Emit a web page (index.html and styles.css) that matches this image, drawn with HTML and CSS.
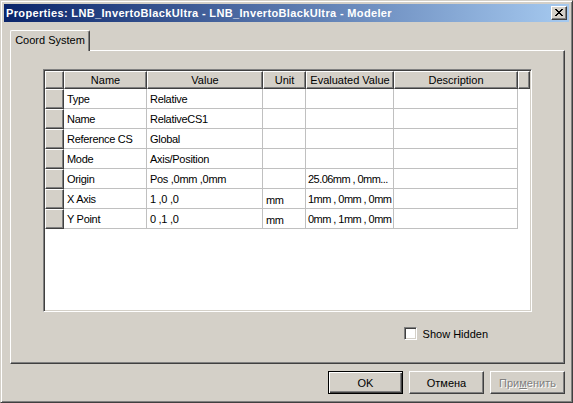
FILE: index.html
```html
<!DOCTYPE html>
<html lang="ru">
<head>
    <meta charset="UTF-8">
    <title>Properties</title>
    <link rel="stylesheet" href="styles.css">
</head>
<body>

    <div class="window">
        <!-- Title bar -->
        <div class="titlebar">
            <span class="title">Properties: LNB_InvertoBlackUltra - LNB_InvertoBlackUltra - Modeler</span>
            <div class="close-btn">
                <svg width="8" height="7" viewBox="0 0 8 7" shape-rendering="crispEdges">
                    <path fill="#000" d="M0 0h2v1H0z M6 0h2v1H6z M1 1h2v1H1z M5 1h2v1H5z M2 2h4v1H2z M3 3h2v1H3z M2 4h4v1H2z M1 5h2v1H1z M5 5h2v1H5z M0 6h2v1H0z M6 6h2v1H6z"/>
                </svg>
            </div>
        </div>

        <div class="dialog-body">
            <!-- Tabs -->
            <div class="tabs">
                <div class="tab active">Coord System</div>
            </div>

            <div class="tab-panel">
                <div class="grid-box">
                    <table class="grid">
                        <colgroup>
                            <col class="c-hdr"><col class="c-name"><col class="c-value"><col class="c-unit"><col class="c-eval"><col class="c-desc"><col class="c-end">
                        </colgroup>
                        <thead>
                            <tr>
                                <th></th>
                                <th>Name</th>
                                <th>Value</th>
                                <th>Unit</th>
                                <th>Evaluated Value</th>
                                <th>Description</th>
                                <th></th>
                            </tr>
                        </thead>
                        <tbody>
                            <tr><th></th><td>Type</td><td>Relative</td><td></td><td></td><td></td><td class="end"></td></tr>
                            <tr><th></th><td>Name</td><td>RelativeCS1</td><td></td><td></td><td></td><td class="end"></td></tr>
                            <tr><th></th><td>Reference CS</td><td>Global</td><td></td><td></td><td></td><td class="end"></td></tr>
                            <tr><th></th><td>Mode</td><td>Axis/Position</td><td></td><td></td><td></td><td class="end"></td></tr>
                            <tr><th></th><td>Origin</td><td>Pos ,0mm ,0mm</td><td></td><td class="eval">25.06mm , 0mm...</td><td></td><td class="end"></td></tr>
                            <tr><th></th><td>X Axis</td><td>1 ,0 ,0</td><td class="unit">mm</td><td class="eval">1mm , 0mm , 0mm</td><td></td><td class="end"></td></tr>
                            <tr><th></th><td>Y Point</td><td>0 ,1 ,0</td><td class="unit">mm</td><td class="eval">0mm , 1mm , 0mm</td><td></td><td class="end"></td></tr>
                        </tbody>
                    </table>
                </div>

                <div class="options">
                    <label class="check"><span class="checkbox"></span>Show Hidden</label>
                </div>
            </div>

            <!-- Dialog buttons -->
            <div class="buttons">
                <button type="button" class="btn default">OK</button>
                <button type="button" class="btn">Отмена</button>
                <button type="button" class="btn disabled">При<u>м</u>енить</button>
            </div>
        </div>
    </div>

</body>
</html>
```

FILE: styles.css
```css
/* Reset */
* {
    margin: 0;
    padding: 0;
    box-sizing: border-box;
}

body {
    font-family: "Liberation Sans", Arial, sans-serif;
    font-size: 11px;
    color: #000;
    background-color: #d4d0c8;
}

/* Window frame */
.window {
    width: 573px;
    height: 403px;
    background-color: #d4d0c8;
    border: 1px solid;
    border-color: #d4d0c8 #404040 #404040 #d4d0c8;
    box-shadow: inset 1px 1px #fff, inset -1px -1px #808080;
    padding: 3px;
    display: flex;
    flex-direction: column;
}

/* Title bar */
.titlebar {
    height: 18px;
    display: flex;
    align-items: center;
    justify-content: space-between;
    background: linear-gradient(to right, #0a246a, #a6caf0);
    padding: 0 2px 0 2px;
}

.title {
    color: #fff;
    font-weight: bold;
    font-size: 11px;
    letter-spacing: 0.35px;
    white-space: nowrap;
}

.close-btn {
    width: 16px;
    height: 14px;
    background-color: #d4d0c8;
    border: 1px solid;
    border-color: #fff #404040 #404040 #fff;
    box-shadow: inset -1px -1px #808080;
    display: flex;
    padding: 2px 0 0 3px;
}

/* Dialog body */
.dialog-body {
    flex: 1;
    display: flex;
    flex-direction: column;
    padding: 8px 4px 0 6px;
}

.tabs {
    display: flex;
    height: 20px;
}

.tab {
    width: 80px;
    height: 21px;
    text-align: center;
    line-height: 18px;
    background-color: #d4d0c8;
    border: 1px solid;
    border-bottom: none;
    border-color: #fff #404040 #fff #fff;
    box-shadow: inset -1px 0 #808080;
    border-radius: 2px 2px 0 0;
    position: relative;
    z-index: 1;
}

.tab-panel {
    width: 555px;
    height: 314px;
    border: 1px solid;
    border-color: #fff #404040 #404040 #fff;
    box-shadow: inset -1px -1px #808080;
}

/* Property grid */
.grid-box {
    width: 489px;
    height: 243px;
    margin: 18px 0 0 32px;
    background-color: #fff;
    border: 1px solid;
    border-color: #808080 #fff #fff #808080;
    box-shadow: inset 1px 1px #404040, inset -1px -1px #d4d0c8;
    padding: 1px;
    overflow: hidden;
}

.grid {
    border-collapse: separate;
    border-spacing: 0;
    table-layout: fixed;
    width: 485px;
}

.c-hdr { width: 19px; }
.c-name { width: 83px; }
.c-value { width: 116px; }
.c-unit { width: 43px; }
.c-eval { width: 88px; }
.c-desc { width: 124px; }
.c-end { width: 12px; }

.grid th {
    height: 18px;
    font-weight: normal;
    text-align: center;
    background-color: #d4d0c8;
    border-top: 1px solid #fff;
    border-left: 1px solid #fff;
    border-right: 1px solid #404040;
    border-bottom: 1px solid #404040;
    box-shadow: inset -1px -1px #808080;
    white-space: nowrap;
    overflow: hidden;
}

.grid tbody th {
    height: 20px;
}

.grid td {
    height: 20px;
    padding: 0 0 0 3px;
    border-right: 1px solid #c0c0c0;
    border-bottom: 1px solid #c0c0c0;
    letter-spacing: -0.3px;
    white-space: nowrap;
    overflow: hidden;
}

.grid td.eval {
    padding-left: 2px;
    letter-spacing: -0.55px;
}

.grid td.end {
    border: none;
}

.grid td.unit {
    padding-top: 3px;
}

/* Show Hidden */
.options {
    display: flex;
    justify-content: flex-end;
    padding: 15px 76px 0 0;
}

.check {
    display: flex;
    align-items: center;
    gap: 6px;
}

.checkbox {
    width: 13px;
    height: 13px;
    background-color: #fff;
    border: 1px solid;
    border-color: #808080 #fff #fff #808080;
    box-shadow: inset 1px 1px #404040, inset -1px -1px #d4d0c8;
}

/* Buttons */
.buttons {
    display: flex;
    justify-content: flex-end;
    gap: 6px;
    padding-top: 7px;
}

.btn {
    width: 75px;
    height: 23px;
    font-family: "Liberation Sans", Arial, sans-serif;
    font-size: 11px;
    color: #000;
    background-color: #d4d0c8;
    border: 1px solid;
    border-color: #fff #404040 #404040 #fff;
    box-shadow: inset -1px -1px #808080;
}

.btn.default {
    border: 1px solid #000;
    box-shadow: inset 1px 1px #fff, inset -1px -1px #404040, inset -2px -2px #808080;
}

.btn.disabled {
    color: #808080;
    text-shadow: 1px 1px #fff;
}
```
